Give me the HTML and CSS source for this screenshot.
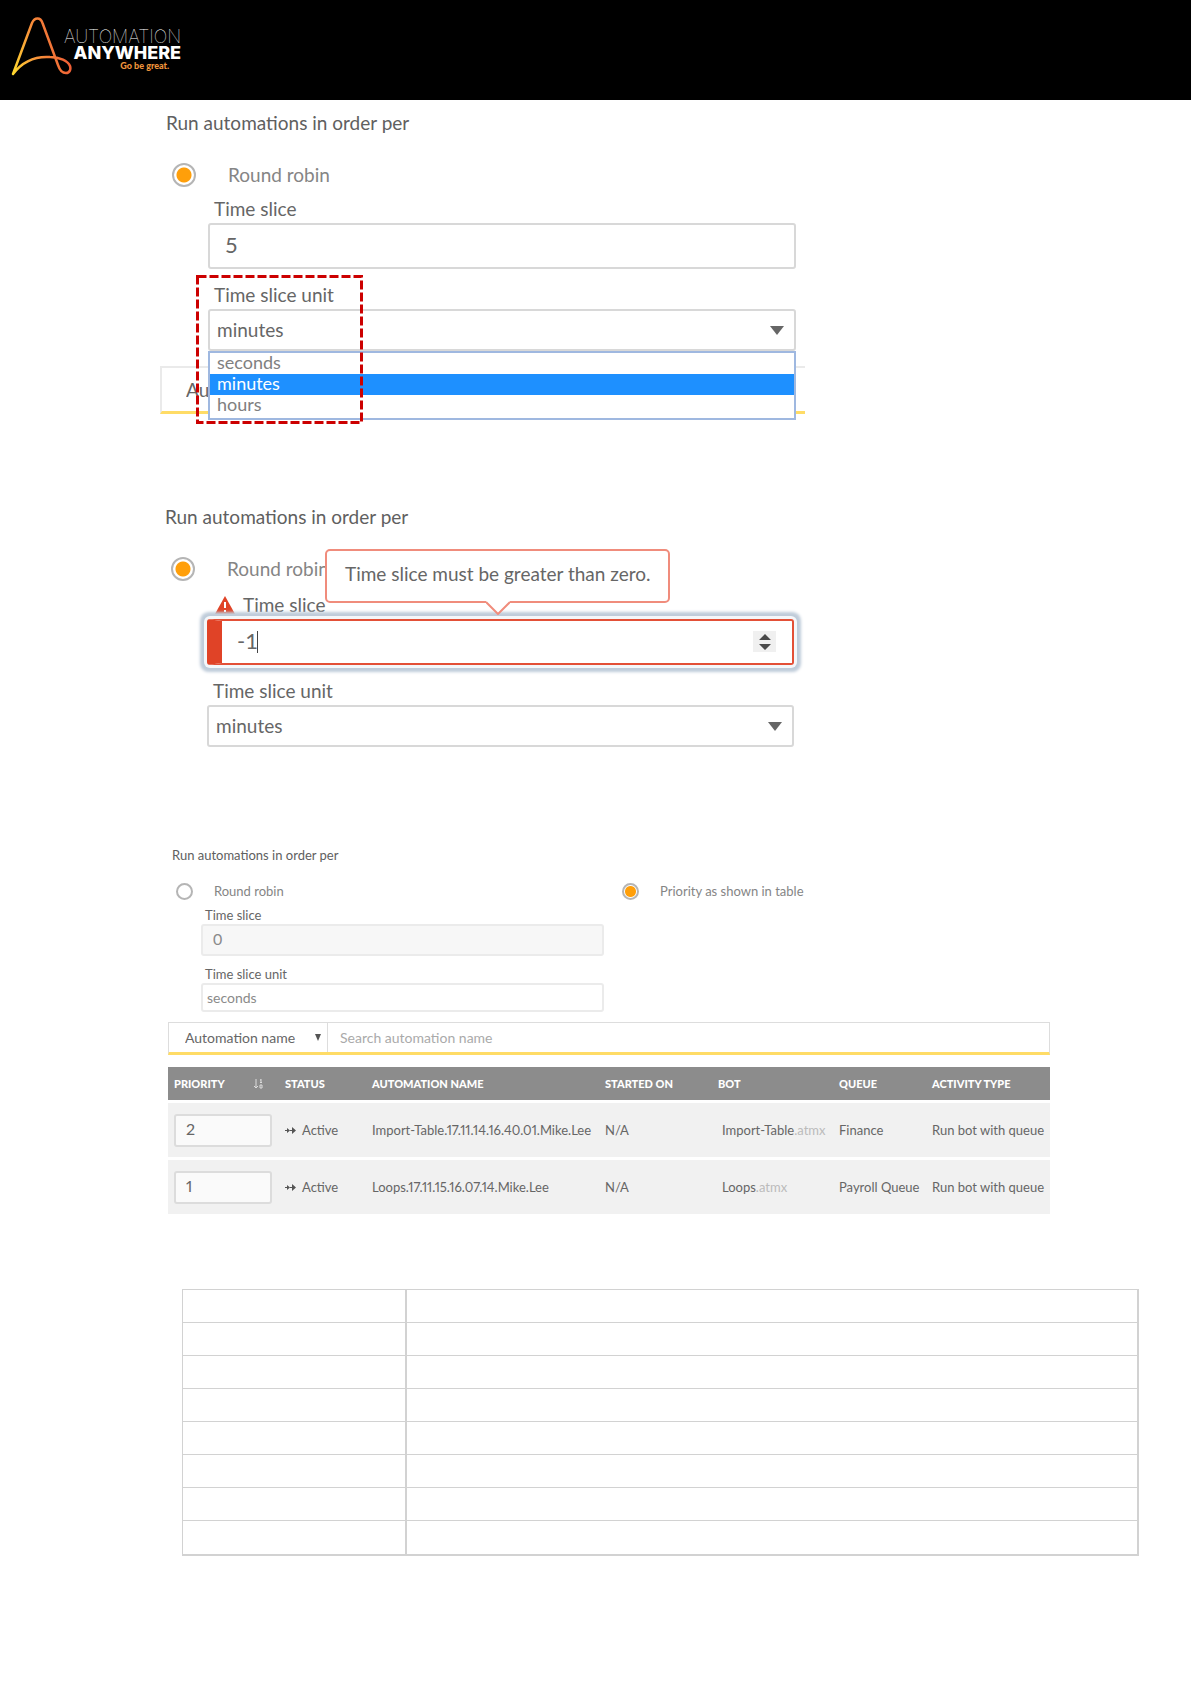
FILE: index.html
```html
<!DOCTYPE html>
<html lang="en">
<head>
    <meta charset="UTF-8">
    <meta name="viewport" content="width=device-width, initial-scale=1.0">
    <title>Automation Anywhere</title>
    <link rel="stylesheet" href="styles.css">
</head>
<body>
    <header class="navbar">
        <a href="#" class="logo">
            <svg class="logo-mark" width="62" height="62" viewBox="0 0 62 62" fill="none" aria-hidden="true">
                <defs>
                    <linearGradient id="flame" x1="2" y1="56" x2="60" y2="40" gradientUnits="userSpaceOnUse">
                        <stop offset="0" stop-color="#ffd92e"/>
                        <stop offset="0.45" stop-color="#f8943a"/>
                        <stop offset="1" stop-color="#ee5a35"/>
                    </linearGradient>
                </defs>
                <path d="M3 59 L22 8 Q24 3.500 27.500 3.500 Q31 3.500 32.500 8 L48 50 C50 56 52 58 56 58 C60 58 61 54 60 51 C58 46 50 42 40 42 C25 41 12 47 3 59 Z" stroke="url(#flame)" stroke-width="2.500" stroke-linejoin="round"/>
            </svg>
            <span class="logo-text">
                <span class="logo-thin">AUTOMATION</span>
                <span class="logo-bold">ANYWHERE</span>
                <span class="logo-tag">Go be great.</span>
            </span>
        </a>
    </header>
    <main>
        <section class="panel panel-unit">
            <h2>Run automations in order per</h2>
            <label class="choice"><input type="radio" name="order1" checked> Round robin</label>
            <div class="fields">
                <label for="slice1">Time slice</label>
                <input class="box" id="slice1" type="text" value="5">
                <div class="unit">
                    <label for="unit1">Time slice unit</label>
                    <div class="select-wrap">
                        <select class="box" id="unit1"><option>minutes</option></select>
                        <svg class="arrow" width="14" height="9" viewBox="0 0 14 9" aria-hidden="true"><path d="M0 0H14L7 9Z" fill="#666"/></svg>
                        <ul class="options" role="listbox" aria-label="Time slice unit">
                            <li role="option">seconds</li>
                            <li role="option" class="active" aria-selected="true">minutes</li>
                            <li role="option">hours</li>
                        </ul>
                    </div>
                    <svg class="marker" width="167" height="149" aria-hidden="true"><rect x="1.500" y="1.500" width="164" height="146" fill="none" stroke="#c00" stroke-width="3" stroke-dasharray="9 3"/></svg>
                </div>
            </div>
            <div class="search">
                <select aria-label="Search by"><option>Automation name</option></select>
            </div>
        </section>

        <section class="panel panel-error">
            <h2>Run automations in order per</h2>
            <label class="choice"><input type="radio" name="order2" checked> Round robin</label>
            <div class="fields">
                <label class="warn" for="slice2">
                    <svg width="20" height="18" viewBox="0 0 20 18" aria-hidden="true"><path d="M10 0L20 18H0Z" fill="#e04327"/><path d="M10 6V12M10 14V16" stroke="#fff" stroke-width="2"/></svg>
                    Time slice
                </label>
                <div class="invalid">
                    <input class="box" id="slice2" type="text" value="-1">
                    <span class="caret"></span>
                    <button class="stepper" type="button" aria-label="Change value"><svg width="12" height="16" viewBox="0 0 12 16" aria-hidden="true"><path d="M6 0L12 6H0ZM0 10H12L6 16Z" fill="#4a4a4a"/></svg></button>
                    <div class="tip" role="alert">Time slice must be greater than zero.
                        <svg class="tip-arrow" width="24" height="14" viewBox="0 0 24 14" aria-hidden="true"><path d="M0 0H24V2H23L12 13L1 2H0Z" fill="#fff"/><path d="M0 1L12 13L24 1" fill="none" stroke="#f08c7c" stroke-width="2"/></svg>
                    </div>
                </div>
                <div class="unit">
                    <label for="unit2">Time slice unit</label>
                    <div class="select-wrap">
                        <select class="box" id="unit2"><option>minutes</option></select>
                        <svg class="arrow" width="14" height="9" viewBox="0 0 14 9" aria-hidden="true"><path d="M0 0H14L7 9Z" fill="#666"/></svg>
                    </div>
                </div>
            </div>
        </section>

        <section class="panel-queue">
            <h2>Run automations in order per</h2>
            <div class="choices">
                <label class="choice"><input type="radio" name="order3"> Round robin</label>
                <label class="choice"><input type="radio" name="order3" checked> Priority as shown in table</label>
            </div>
            <div class="fields">
                <label for="slice3">Time slice</label>
                <input class="box" id="slice3" type="text" value="0" disabled>
                <div class="unit">
                    <label for="unit3">Time slice unit</label>
                    <select class="box" id="unit3" disabled><option>seconds</option></select>
                </div>
            </div>
            <div class="search">
                <div class="select-wrap">
                    <select aria-label="Search by"><option>Automation name</option></select>
                    <svg class="arrow" width="6" height="7" viewBox="0 0 6 7" aria-hidden="true"><path d="M0 0H6L3 7Z" fill="#555"/></svg>
                </div>
                <input type="text" placeholder="Search automation name" aria-label="Search automation name">
            </div>
            <table class="queue">
                <colgroup><col class="c-priority"><col class="c-status"><col class="c-name"><col class="c-started"><col class="c-bot"><col class="c-queue"><col></colgroup>
                <thead>
                    <tr>
                        <th><span class="sort">PRIORITY <svg width="9" height="10" viewBox="0 0 9 10" fill="none" stroke="#ddd" aria-hidden="true"><path d="M2 0V9M0 7L2 9L4 7M7 0V3M6 1H7M6 3.500H8M6 6H8V9H6Z"/></svg></span></th>
                        <th>STATUS</th>
                        <th>AUTOMATION NAME</th>
                        <th>STARTED ON</th>
                        <th>BOT</th>
                        <th>QUEUE</th>
                        <th>ACTIVITY TYPE</th>
                    </tr>
                </thead>
                <tbody>
                    <tr>
                        <td><input class="priority" type="text" value="2" aria-label="Priority"></td>
                        <td><span class="status"><svg width="11" height="7" viewBox="0 0 11 7" fill="#555" aria-hidden="true"><path d="M0 3H2V1L5 3.500L2 6V4H0ZM5 3H7V0L11 3.500L7 7V4H5Z"/></svg>Active</span></td>
                        <td>Import-Table.17.11.14.16.40.01.Mike.Lee</td>
                        <td>N/A</td>
                        <td class="bot">Import-Table<span>.atmx</span></td>
                        <td>Finance</td>
                        <td>Run bot with queue</td>
                    </tr>
                    <tr>
                        <td><input class="priority" type="text" value="1" aria-label="Priority"></td>
                        <td><span class="status"><svg width="11" height="7" viewBox="0 0 11 7" fill="#555" aria-hidden="true"><path d="M0 3H2V1L5 3.500L2 6V4H0ZM5 3H7V0L11 3.500L7 7V4H5Z"/></svg>Active</span></td>
                        <td>Loops.17.11.15.16.07.14.Mike.Lee</td>
                        <td>N/A</td>
                        <td class="bot">Loops<span>.atmx</span></td>
                        <td>Payroll Queue</td>
                        <td>Run bot with queue</td>
                    </tr>
                </tbody>
            </table>
        </section>

        <table class="grid">
            <colgroup><col class="g-name"><col></colgroup>
            <tbody>
                <tr><td></td><td></td></tr>
                <tr><td></td><td></td></tr>
                <tr><td></td><td></td></tr>
                <tr><td></td><td></td></tr>
                <tr><td></td><td></td></tr>
                <tr><td></td><td></td></tr>
                <tr><td></td><td></td></tr>
                <tr><td></td><td></td></tr>
            </tbody>
        </table>
    </main>
</body>
</html>
```
FILE: styles.css
```css
* { box-sizing: border-box; }
body { margin: 0; background-color: #fff; color: #666; font-family: Lato, "Open Sans", sans-serif; }
h2 { margin: 0; font-weight: 400; color: #606060; }
input, select, button { font: inherit; color: inherit; margin: 0; }
select { appearance: none; border: 0; background: none; }

.navbar { height: 100px; padding: 15px 10px; background-color: #000; }
.logo { display: flex; width: max-content; text-decoration: none; color: #fff; font-family: Inter, sans-serif; }
.logo-text { display: flex; flex-direction: column; align-items: flex-end; padding-top: 13px; margin-left: -8px; }
.logo-thin { font-size: 18px; line-height: 17px; font-weight: 100; }
.logo-bold { font-size: 18px; line-height: 15px; font-weight: 800; }
.logo-tag { margin-right: 12px; color: #f0943c; font-family: Lato, sans-serif; font-size: 9px; line-height: 12px; font-weight: 900; }

main { padding: 0 52px 80px 160px; }
.choice { display: flex; align-items: center; color: #858585; }
input[type="radio"] { appearance: none; flex: none; border: 2px solid #b5b5b5; border-radius: 50%; background-color: #fff; }
input[type="radio"]:checked { background: radial-gradient(circle, #ff9f0a 0 7px, #fff 8px); }
.fields label { display: block; }
.box { display: block; width: 100%; border: 2px solid #d8d8d8; border-radius: 3px; background-color: #fff; }
.select-wrap { position: relative; }
.arrow { position: absolute; top: 50%; margin-top: -4px; right: 12px; pointer-events: none; }

/* large panels */
.panel { max-width: 645px; font-size: 19px; line-height: 26px; }
.panel h2 { padding-left: 6px; font-size: 19px; line-height: 26px; }
.panel .choice { margin-top: 26px; padding-left: 12px; gap: 32px; }
.panel input[type="radio"] { width: 24px; height: 24px; }
.panel .fields { padding: 8px 9px 0 48px; }
.panel .fields label { padding: 0 0 1px 6px; }
.panel input.box { height: 46px; padding: 0 15px 3px; font-size: 22px; }
.panel select.box { height: 42px; padding: 0 7px; }
.panel .unit { position: relative; margin-top: 13px; }
.panel-unit { padding-top: 10px; }
.options { position: absolute; z-index: 2; top: 42px; left: 0; right: 0; margin: 0; padding: 0 0 2px; list-style: none; border: 2px solid #9fb8e0; background-color: #fff; font-size: 18px; line-height: 18px; color: #808080; }
.options li { padding: 0 7px 3px; }
.options .active { background-color: #1e90ff; color: #fff; }
.marker { position: absolute; z-index: 3; top: -7px; left: -12px; pointer-events: none; }
.panel-unit .search { height: 48px; margin-top: 15px; border: 2px solid #eaeaea; border-right: 0; border-bottom: 3px solid #ffdc66; }
.panel-unit .search select { width: 200px; height: 43px; padding-left: 24px; }

.panel-error { margin-top: 90px; padding-right: 2px; }
.panel-error h2 { padding-left: 5px; }
.panel-error .choice { padding-left: 11px; }
.panel-error .fields { padding: 10px 9px 0 47px; }
.panel .fields .warn { display: flex; align-items: center; gap: 8px; padding-left: 8px; }
.invalid { position: relative; }
.invalid .box { border-color: #e35037; border-left: 15px solid #e04327; box-shadow: 0 0 0 3px #f4f7fa, 0 0 3px 7px #bfccda; }
.caret { position: absolute; left: 50px; top: 12px; width: 1px; height: 22px; background-color: #444; }
.stepper { position: absolute; top: 12px; right: 18px; width: 23px; height: 21px; padding: 0; border: 0; background-color: #f0f0f0; display: flex; align-items: center; justify-content: center; }
.tip { position: absolute; bottom: 62px; left: 118px; height: 54px; padding: 10px 18px; border: 2px solid #f08c7c; border-radius: 5px; background-color: #fff; white-space: nowrap; }
.tip-arrow { position: absolute; left: 50%; margin-left: -12px; top: 50px; }

/* queue panel */
.panel-queue { max-width: 890px; margin-top: 99px; padding-left: 8px; font-size: 13px; line-height: 18px; }
.panel-queue h2 { padding-left: 4px; font-size: 13px; line-height: 18px; }
.choices { display: grid; grid-template-columns: 446px 1fr; margin-top: 18px; padding-left: 8px; }
.panel-queue .choice { gap: 21px; }
.panel-queue input[type="radio"] { width: 17px; height: 17px; }
.panel-queue input[type="radio"]:checked { background: radial-gradient(circle, #ff9f0a 0 5px, #fff 6px); }
.panel-queue .fields { max-width: 436px; padding: 6px 0 0 33px; }
.panel-queue .fields label { padding-left: 4px; }
.panel-queue .box { border-color: #ebebeb; color: #8a8a8a; opacity: 1; }
.panel-queue input.box { height: 32px; padding: 0 10px 3px; background-color: #f7f7f7; font-size: 16px; }
.panel-queue select.box { height: 29px; padding: 0 4px; font-size: 14px; }
.panel-queue .unit { margin-top: 9px; }
.panel-queue .search { display: flex; height: 33px; margin-top: 10px; border: 1px solid #ddd; border-bottom: 3px solid #ffdc66; font-size: 14px; }
.panel-queue .search select { width: 158px; height: 29px; padding: 0 16px; }
.panel-queue .search .select-wrap { border-right: 1px solid #ddd; }
.panel-queue .search .arrow { right: 6px; }
.search input { flex: 1; border: 0; padding: 0 12px; background: none; }
.search input::placeholder { color: #aaa; }

.queue { width: 100%; margin-top: 9px; table-layout: fixed; border-collapse: separate; border-spacing: 0 3px; font-variant-numeric: proportional-nums; }
.queue th { height: 33px; padding: 0 0 0 6px; background-color: #8c8c8c; color: #fff; font-size: 11px; font-weight: 900; text-align: left; }
.queue td { height: 54px; padding: 0 0 0 6px; background-color: #f1f1f1; white-space: nowrap; }
.c-priority { width: 111px; }
.c-status { width: 87px; }
.c-name { width: 233px; }
.c-started { width: 113px; }
.c-bot { width: 121px; }
.c-queue { width: 93px; }
.sort { display: flex; align-items: center; justify-content: space-between; padding-right: 16px; }
.priority { display: block; width: 98px; height: 33px; padding: 0 10px 3px; border: 2px solid #dcdcdc; border-radius: 3px; background-color: #fafafa; font-size: 16px; }
.status { display: flex; align-items: center; gap: 6px; }
.queue .bot { padding-left: 10px; }
.bot span { color: #bbb; }

.grid { width: calc(100% - 22px); margin: 72px 0 0 22px; table-layout: fixed; border-collapse: separate; border-spacing: 0; border: 1px solid #d2d2d2; border-width: 0 1px 1px 1px; }
.grid td { height: 33px; padding: 0; border-top: 1px solid #d2d2d2; border-right: 1px solid #d2d2d2; }
.grid td:first-child { border-right-width: 2px; }
.grid tr:last-child td { height: 35px; border-bottom: 1px solid #d2d2d2; }
.g-name { width: 224px; }
```
